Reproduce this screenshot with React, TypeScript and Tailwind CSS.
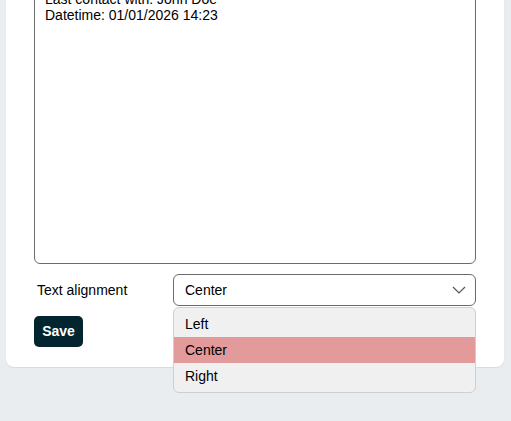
import React from "react";

export default function App() {
  return (
    <div
      className="min-h-[421px] w-[511px] overflow-hidden bg-[#e9edf0] pl-[6px] pr-[7px] text-[14px] text-black"
      style={{ fontFamily: '"Liberation Sans", Arial, Helvetica, sans-serif' }}
    >
      <div className="-mt-[18px] rounded-b-lg bg-white px-7 pb-5 shadow-[0_1px_1px_rgba(0,0,0,0.08)]">
        <textarea
          readOnly
          className="block h-[282px] w-full resize-none rounded-md border border-[#6b6b6b] bg-white px-[10px] pt-[8px] text-[14px] leading-[16px] text-black outline-none"
          style={{ fontFamily: '"Liberation Sans", Arial, Helvetica, sans-serif' }}
          value={"Last contact with: John Doe\nDatetime: 01/01/2026 14:23"}
        />
        <div className="mt-[10px] flex items-center">
          <div className="w-[139px] pl-[3px]">Text alignment</div>
          <div className="relative flex-1">
            <div className="flex h-[32px] items-center justify-between rounded-md border border-[#6b6b6b] bg-white pl-[11px] pr-[9px]">
              <span>Center</span>
              <svg width="14" height="8" viewBox="0 0 14 8" fill="none">
                <path d="M1 1l6 6 6-6" stroke="#555" strokeWidth="1.2" />
              </svg>
            </div>
            <div className="absolute left-0 right-0 top-[33px] z-10 rounded-md border border-[#cfcfcf] bg-[#f0f0f0] py-[3px]">
              <div className="flex h-[26px] items-center pl-[11px]">Left</div>
              <div className="flex h-[26px] items-center bg-[#e29a9a] pl-[11px]">Center</div>
              <div className="flex h-[26px] items-center pl-[11px]">Right</div>
            </div>
          </div>
        </div>
        <div className="mt-[10px]">
          <button className="h-[31px] w-[49px] rounded-[5px] bg-[#03252f] text-[14px] font-bold text-white">
            Save
          </button>
        </div>
      </div>
    </div>
  );
}
